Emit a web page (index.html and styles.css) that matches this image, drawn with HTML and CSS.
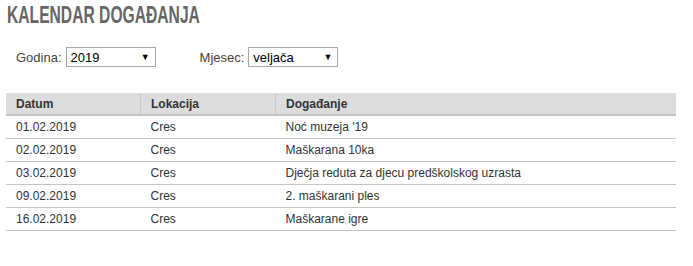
FILE: index.html
```html
<!DOCTYPE html>
<html lang="hr">
  <head>
    <meta charset="UTF-8" />
    <title>Kalendar događanja</title>
    <link rel="stylesheet" href="styles.css">
  </head>
  <body>
    <div class="kalendar">
      <h1><span>KALENDAR DOGAĐANJA</span></h1>

      <!-- filter po godini i mjesecu -->
      <div class="filter">
        <label>Godina:
          <span class="izbor"><span>2019</span><b>▼</b></span>
        </label>
        <label>Mjesec:
          <span class="izbor"><span>veljača</span><b>▼</b></span>
        </label>
      </div>

      <table class="dogadanja">
        <thead>
          <tr>
            <th class="datum">Datum</th>
            <th class="lokacija">Lokacija</th>
            <th>Događanje</th>
          </tr>
        </thead>
        <tbody>
          <tr><td>01.02.2019</td><td>Cres</td><td>Noć muzeja '19</td></tr>
          <tr><td>02.02.2019</td><td>Cres</td><td>Maškarana 10ka</td></tr>
          <tr><td>03.02.2019</td><td>Cres</td><td>Dječja reduta za djecu predškolskog uzrasta</td></tr>
          <tr><td>09.02.2019</td><td>Cres</td><td>2. maškarani ples</td></tr>
          <tr><td>16.02.2019</td><td>Cres</td><td>Maškarane igre</td></tr>
        </tbody>
      </table>
    </div>
  </body>
</html>
```

FILE: styles.css
```css
body {
  margin: 0;
  padding: 0 6px;
  background: #fff;
  font-family: Arial, "Liberation Sans", sans-serif;
  font-size: 12px;
  color: #333;
}
h1 {
  margin: 0;
  padding: 3px 0 0 1px;
  height: 28px;
  box-sizing: border-box;
  font-family: "Liberation Sans", Arial, sans-serif;
  font-weight: bold;
  font-size: 23px;
  line-height: 24px;
  color: #666;
}
/* uski naslov */
h1 span {
  display: inline-block;
  transform: scaleX(0.68);
  transform-origin: left center;
}
.filter {
  display: flex;
  gap: 44px;
  padding: 19px 0 0 10px;
  height: 47px;
  box-sizing: border-box;
}
.filter label {
  display: flex;
  align-items: center;
  gap: 4px;
  height: 20px;
  color: #4a4038;
  font-size: 13px;
}
.izbor {
  display: flex;
  justify-content: space-between;
  align-items: center;
  width: 90px;
  height: 20px;
  box-sizing: border-box;
  padding: 0 5px 0 4px;
  border: 1px solid #a9a9a9;
  color: #000;
  font-size: 13px;
}
.izbor b {
  font-size: 9px;
  font-weight: normal;
}
.dogadanja {
  width: 670px;
  border-collapse: collapse;
  margin-top: 18px;
}
.dogadanja th {
  background: #dcdcdc;
  text-align: left;
  font-weight: bold;
  height: 21px;
  padding: 0 10px;
  border-bottom: 2px solid #c4c4c4;
  border-left: 1px solid #c8c8c8;
  font-size: 12px;
  color: #333;
}
.dogadanja th:first-child {
  border-left: none;
}
.dogadanja .datum,
.dogadanja .lokacija {
  width: 114px;
}
.dogadanja td {
  height: 22px;
  padding: 0 10px;
  border-bottom: 1px solid #c4c4c4;
}
```
